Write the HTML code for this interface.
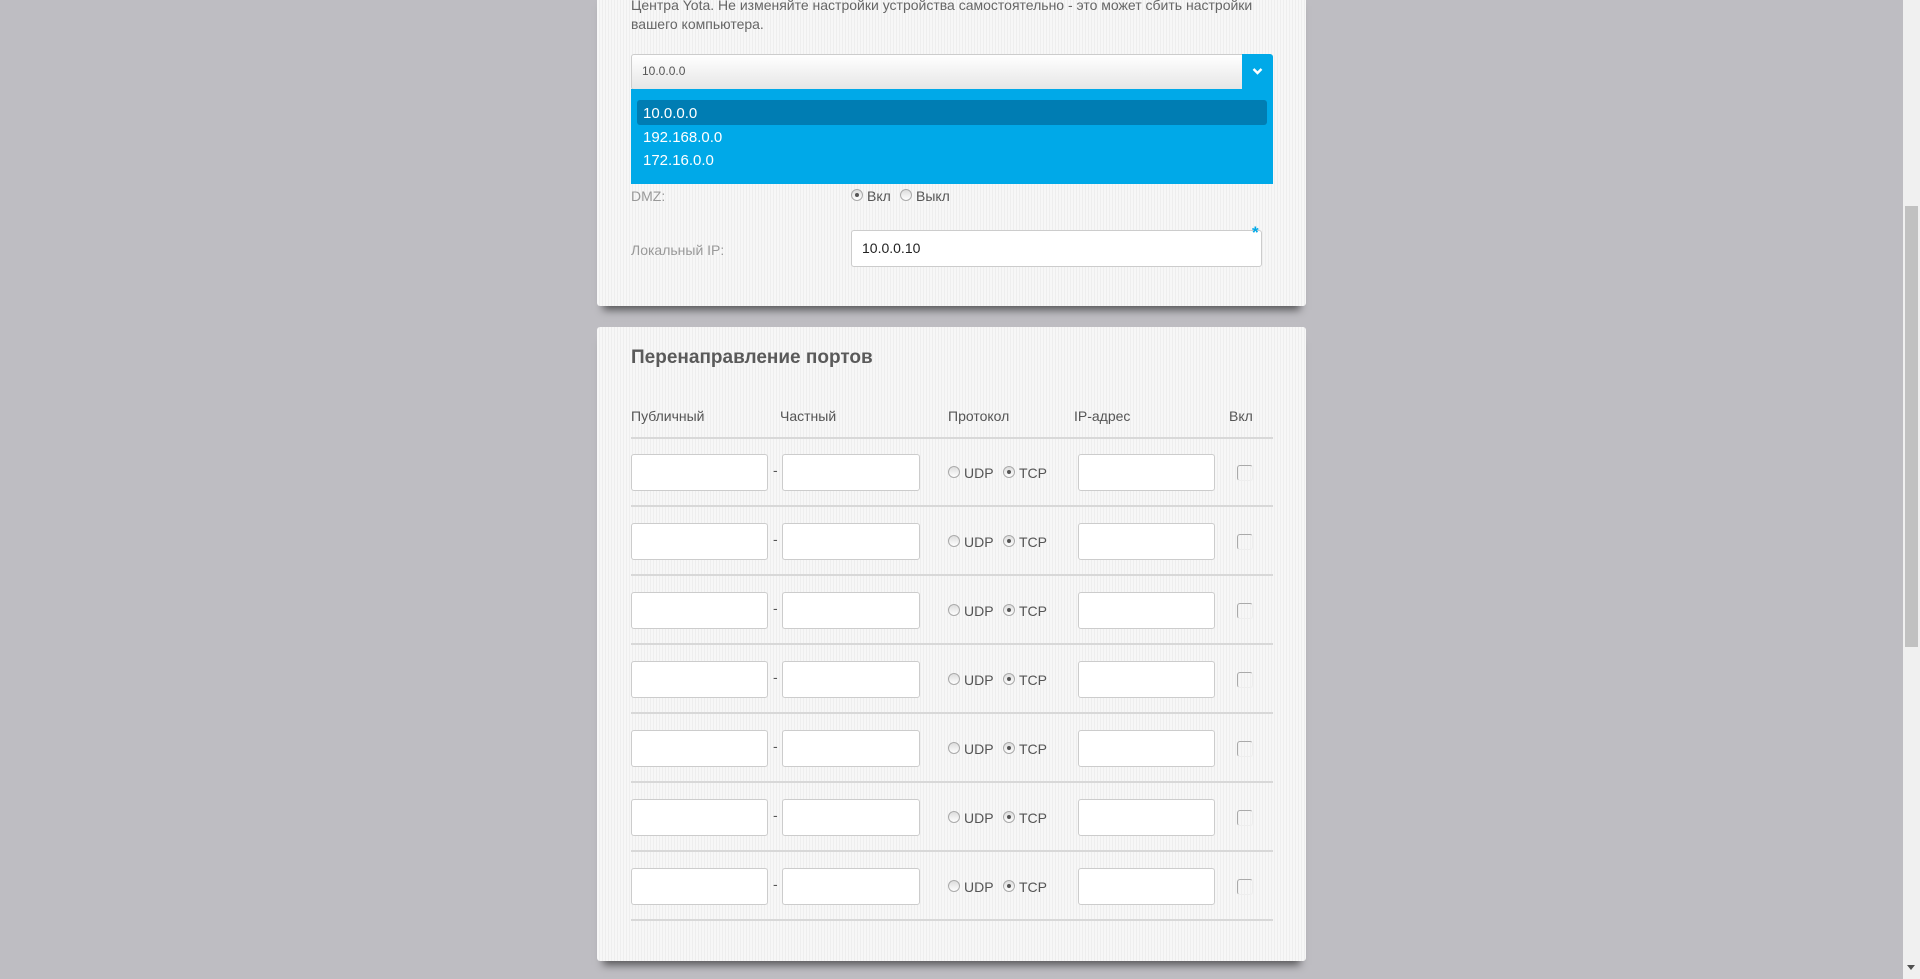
<!DOCTYPE html>
<html><head><meta charset="utf-8"><style>
*{box-sizing:border-box;margin:0;padding:0}
body{width:1920px;height:979px;overflow:hidden;background:#bebdc2;font-family:"Liberation Sans",sans-serif;position:relative;color:#666}
.card{position:absolute;left:597px;width:709px;background:#f5f5f5;background-image:repeating-linear-gradient(90deg,#f7f7f7 0 2px,#eeeeee 2px 3px);border-radius:3px;box-shadow:0 10px 8px -6px rgba(0,0,0,.55)}
.a{position:absolute}
.inp{position:absolute;background:#fff;border:1px solid #ccc;border-radius:3px;height:37px}
.rad{position:absolute;width:12px;height:12px;border-radius:50%;border:1px solid #aaa;background:linear-gradient(#ddd,#fff)}
.rad.on::after{content:"";position:absolute;left:3px;top:3px;width:4px;height:4px;border-radius:50%;background:#555}
.cb{position:absolute;width:16px;height:16px;border:1px solid #aaa;border-radius:3px;border-right-color:#eee;border-bottom-color:#eee}
.line{position:absolute;left:34px;width:642px;height:2px;background:#d8d8d8}
.t{position:absolute;font-size:14px;color:#555;white-space:nowrap}
</style></head><body>
<div class="card" style="top:-10px;height:316px">
 <div class="t" style="left:34px;top:6px;line-height:19px;color:#666">Центра Yota. Не изменяйте настройки устройства самостоятельно - это может сбить настройки<br>вашего компьютера.</div>
 <div class="a" style="left:34px;top:64px;width:642px;height:36px;border:1px solid #ccc;border-radius:3px;background:linear-gradient(#fff,#e6e6e6)"></div>
 <div class="t" style="left:45px;top:74px;font-size:12px;color:#555">10.0.0.0</div>
 <div class="a" style="left:645px;top:64px;width:31px;height:36px;background:#00a9e8;border-radius:0 3px 0 0"></div>
 <svg class="a" style="left:655px;top:77px" width="11" height="9"><path d="M1.5 2 L5.5 6 L9.5 2" stroke="#fff" stroke-width="2.4" fill="none"/></svg>
 <div class="a" style="left:34px;top:99px;width:642px;height:95px;background:#00a9e8"></div>
 <div class="a" style="left:40px;top:110px;width:630px;height:25px;background:#007db3;border-radius:3px"></div>
 <div class="t" style="left:46px;top:115px;font-size:15px;color:#fff">10.0.0.0</div>
 <div class="t" style="left:46px;top:139px;font-size:15px;color:#fff">192.168.0.0</div>
 <div class="t" style="left:46px;top:162px;font-size:15px;color:#fff">172.16.0.0</div>
 <div class="t" style="left:34px;top:198px;color:#999">DMZ:</div>
 <div class="rad on" style="left:254px;top:199px"></div>
 <div class="t" style="left:270px;top:198px">Вкл</div>
 <div class="rad" style="left:303px;top:199px"></div>
 <div class="t" style="left:319px;top:198px">Выкл</div>
 <div class="t" style="left:34px;top:252px;color:#999">Локальный IP:</div>
 <div class="inp" style="left:254px;top:240px;width:411px;height:37px"></div>
 <div class="t" style="left:265px;top:250px;color:#222">10.0.0.10</div>
 <div class="t" style="left:655px;top:233px;color:#00a9e8;font-size:17px;font-weight:bold">*</div>
</div>
<div class="card" style="top:327px;height:634px">
 <div class="t" style="left:34px;top:20px;font-size:19px;font-weight:bold;color:#5a5a5a">Перенаправление портов</div>
 <div class="t" style="left:34px;top:81px">Публичный</div>
 <div class="t" style="left:183px;top:81px">Частный</div>
 <div class="t" style="left:351px;top:81px">Протокол</div>
 <div class="t" style="left:477px;top:81px">IP-адрес</div>
 <div class="t" style="left:632px;top:81px">Вкл</div>
 <div class="line" style="top:110px"></div>
 <div id="rows"></div>
</div>
<div class="a" style="left:1903px;top:0;width:17px;height:979px;background:#f0f0f0"></div>
<div class="a" style="left:1905px;top:206px;width:13px;height:441px;background:#c1c1c1"></div>
<svg class="a" style="left:1906px;top:964px" width="10" height="8"><path d="M1 1H9L5 6Z" fill="#505050"/></svg>
<script>
var h='';for(var i=0;i<7;i++){var y=127+i*69;
h+='<div class="inp" style="left:34px;top:'+y+'px;width:137px"></div>'+
'<div class="t" style="left:176px;top:'+(y+8)+'px">-</div>'+
'<div class="inp" style="left:185px;top:'+y+'px;width:138px"></div>'+
'<div class="rad" style="left:351px;top:'+(y+12)+'px"></div><div class="t" style="left:367px;top:'+(y+11)+'px">UDP</div>'+
'<div class="rad on" style="left:406px;top:'+(y+12)+'px"></div><div class="t" style="left:422px;top:'+(y+11)+'px">TCP</div>'+
'<div class="inp" style="left:481px;top:'+y+'px;width:137px"></div>'+
'<div class="cb" style="left:640px;top:'+(y+11)+'px"></div>'+
'<div class="line" style="top:'+(y+51)+'px"></div>';}
document.getElementById('rows').innerHTML=h;
</script>
</body></html>
